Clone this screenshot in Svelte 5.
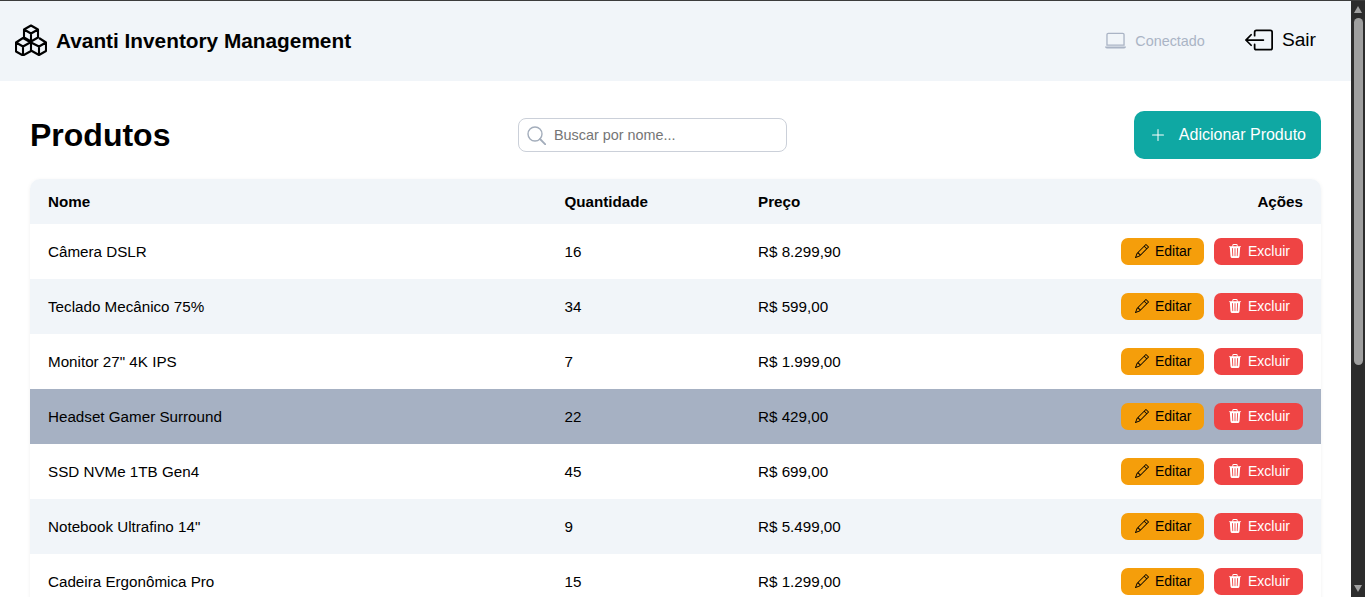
<script>
  const products = [
    { name: 'Câmera DSLR', qty: 16, price: 'R$ 8.299,90' },
    { name: 'Teclado Mecânico 75%', qty: 34, price: 'R$ 599,00' },
    { name: 'Monitor 27" 4K IPS', qty: 7, price: 'R$ 1.999,00' },
    { name: 'Headset Gamer Surround', qty: 22, price: 'R$ 429,00', selected: true },
    { name: 'SSD NVMe 1TB Gen4', qty: 45, price: 'R$ 699,00' },
    { name: 'Notebook Ultrafino 14"', qty: 9, price: 'R$ 5.499,00' },
    { name: 'Cadeira Ergonômica Pro', qty: 15, price: 'R$ 1.299,00' }
  ];

  let search = '';
</script>

<div class="window">
  <div class="page">
    <header class="topbar">
      <div class="brand">
        <svg class="logo" viewBox="0 0 32 32" fill="none" stroke="currentColor" stroke-width="2.100" stroke-linejoin="round">
          <path d="M16 1.500l7 4v8l-7 4-7-4v-8zM9 5.500l7 4 7-4M16 9.500v8" />
          <path d="M8 14l8 4.500v8.500l-8 4.500-7-4v-9zM1 18.500l7 4 8-4.500M8 22.500v8.500" />
          <path d="M24 14l7 4.500v8.500l-7 4-8-4.500M16 18.500l8 4 7-4M24 22.500v8.500" />
        </svg>
        <span>Avanti Inventory Management</span>
      </div>
      <div class="top-actions">
        <div class="status">
          <svg viewBox="0 0 16 16" fill="currentColor">
            <path d="M13.500 3a.5.5 0 0 1 .5.5V11H2V3.500a.5.5 0 0 1 .5-.5zm-11-1A1.500 1.500 0 0 0 1 3.500V12h14V3.500A1.500 1.500 0 0 0 13.500 2zM0 12.500h16a1.500 1.500 0 0 1-1.500 1.500h-13A1.500 1.500 0 0 1 0 12.500" />
          </svg>
          <span>Conectado</span>
        </div>
        <button class="logout" type="button">
          <svg viewBox="0 0 16 16" fill="currentColor">
            <path d="M6 12.500a.5.5 0 0 0 .5.5h8a.5.5 0 0 0 .5-.5v-9a.5.5 0 0 0-.5-.5h-8a.5.5 0 0 0-.5.5v2a.5.5 0 0 1-1 0v-2A1.500 1.500 0 0 1 6.500 2h8A1.500 1.500 0 0 1 16 3.500v9a1.500 1.500 0 0 1-1.500 1.500h-8A1.500 1.500 0 0 1 5 12.500v-2a.5.5 0 0 1 1 0z" />
            <path d="M.146 8.354a.5.5 0 0 1 0-.708l3-3a.5.5 0 1 1 .708.708L1.707 7.500H10.500a.5.5 0 0 1 0 1H1.707l2.147 2.146a.5.5 0 0 1-.708.708z" />
          </svg>
          Sair
        </button>
      </div>
    </header>

    <main class="content">
      <div class="toolbar">
        <h1>Produtos</h1>
        <label class="search">
          <svg viewBox="0 0 19 19" fill="none" stroke="currentColor" stroke-width="1.400">
            <circle cx="8" cy="8" r="7" />
            <path d="M13 13l5.300 5.300" stroke-width="1.800" stroke-linecap="round" />
          </svg>
          <input type="text" placeholder="Buscar por nome..." bind:value={search} />
        </label>
        <button class="add" type="button">
          <svg viewBox="0 0 16 16" fill="currentColor">
            <path fill-rule="evenodd" d="M8 2a.5.5 0 0 1 .5.5v5h5a.5.5 0 0 1 0 1h-5v5a.5.5 0 0 1-1 0v-5h-5a.5.5 0 0 1 0-1h5v-5A.5.5 0 0 1 8 2" />
          </svg>
          Adicionar Produto
        </button>
      </div>

      <div class="table-card">
        <table>
          <thead>
            <tr>
              <th class="col-name">Nome</th>
              <th class="col-qty">Quantidade</th>
              <th>Preço</th>
              <th class="col-actions">Ações</th>
            </tr>
          </thead>
          <tbody>
            {#each products as product}
              <tr class:selected={product.selected}>
                <td>{product.name}</td>
                <td>{product.qty}</td>
                <td>{product.price}</td>
                <td class="col-actions">
                  <div class="actions">
                    <button class="edit" type="button">
                      <svg viewBox="0 0 16 16" fill="currentColor">
                        <path d="M12.146.146a.5.5 0 0 1 .708 0l3 3a.5.5 0 0 1 0 .708l-10 10a.5.5 0 0 1-.168.11l-5 2a.5.5 0 0 1-.65-.65l2-5a.5.5 0 0 1 .11-.168zM11.207 2.500 13.500 4.793 14.793 3.500 12.500 1.207zm1.586 3L10.500 3.207 4 9.707V10h.5a.5.5 0 0 1 .5.5v.5h.5a.5.5 0 0 1 .5.5v.5h.293zm-9.761 5.175-.106.106-1.528 3.821 3.821-1.528.106-.106A.5.5 0 0 1 5 12.500V12h-.5a.5.5 0 0 1-.5-.5V11h-.5a.5.5 0 0 1-.468-.325" />
                      </svg>
                      Editar
                    </button>
                    <button class="delete" type="button">
                      <svg viewBox="0 0 16 16" fill="currentColor">
                        <path d="M11 1.500v1h3.500a.5.5 0 0 1 0 1h-.538l-.853 10.660A2 2 0 0 1 11.115 16h-6.230a2 2 0 0 1-1.994-1.840L2.038 3.500H1.500a.5.5 0 0 1 0-1H5v-1A1.500 1.500 0 0 1 6.500 0h3A1.500 1.500 0 0 1 11 1.500m-5 0v1h4v-1a.5.5 0 0 0-.5-.5h-3a.5.5 0 0 0-.5.5M4.500 5.029l.5 8.500a.5.5 0 1 0 .998-.06l-.5-8.500a.5.5 0 1 0-.998.06m6.530-.528a.5.5 0 0 0-.528.47l-.5 8.500a.5.5 0 0 0 .998.058l.5-8.500a.5.5 0 0 0-.47-.528M8 4.500a.5.5 0 0 0-.5.5v8.500a.5.5 0 0 0 1 0V5a.5.5 0 0 0-.5-.5" />
                      </svg>
                      Excluir
                    </button>
                  </div>
                </td>
              </tr>
            {/each}
          </tbody>
        </table>
      </div>
    </main>
  </div>

  <div class="scrollbar" aria-hidden="true">
    <span class="arrow up"></span>
    <span class="thumb"></span>
    <span class="arrow down"></span>
  </div>
</div>

<style>
  :global(body) {
    margin: 0;
    background: #fff;
  }

  .window {
    display: flex;
    height: 100vh;
    box-sizing: border-box;
    border-top: 1px solid #3c3c3c;
    overflow: hidden;
    font-family: "Liberation Sans", Arial, sans-serif;
    color: #000;
  }

  .page {
    flex: 1;
    min-width: 0;
    overflow: hidden;
  }

  /* header */
  .topbar {
    display: flex;
    align-items: center;
    justify-content: space-between;
    height: 80px;
    padding: 0 35px 0 15px;
    background: #f1f5f9;
  }

  .brand {
    display: flex;
    align-items: center;
    gap: 9px;
    font-size: 20.800px;
    font-weight: 700;
  }

  .logo {
    width: 32px;
    height: 32px;
    margin-top: -3px;
  }

  .top-actions {
    display: flex;
    align-items: center;
    gap: 40px;
  }

  .status {
    display: flex;
    align-items: center;
    gap: 9px;
    font-size: 14.400px;
    color: #aab4c5;
  }

  .status svg {
    width: 21px;
    height: 21px;
    margin-top: -2px;
  }

  .logout {
    display: flex;
    align-items: center;
    gap: 9px;
    padding: 0 0 2px;
    border: 0;
    background: none;
    font: inherit;
    font-size: 19.200px;
    color: #000;
    cursor: pointer;
  }

  .logout svg {
    width: 28px;
    height: 28px;
  }

  /* toolbar */
  .content {
    padding: 30px 30px 0;
  }

  .toolbar {
    display: grid;
    grid-template-columns: 488px 269px 1fr;
    align-items: center;
    height: 48px;
    margin-bottom: 20px;
  }

  h1 {
    margin: 0;
    font-size: 32px;
    font-weight: 700;
  }

  .search {
    display: flex;
    align-items: center;
    gap: 8px;
    height: 34px;
    box-sizing: border-box;
    padding: 0 8px;
    border: 1px solid #cbd0d9;
    border-radius: 8px;
    background: #fff;
    color: #a3adbb;
  }

  .search svg {
    flex: none;
    width: 19px;
    height: 19px;
  }

  .search input {
    flex: 1;
    min-width: 0;
    padding: 0;
    border: 0;
    outline: 0;
    background: none;
    font: inherit;
    font-size: 14.400px;
    color: #000;
  }

  .search input::placeholder {
    color: #757575;
    opacity: 1;
  }

  .add {
    justify-self: end;
    display: flex;
    align-items: center;
    gap: 13px;
    height: 48px;
    padding: 0 15px 0 16px;
    border: 0;
    border-radius: 10px;
    background: #0fa8a3;
    font: inherit;
    font-size: 16px;
    color: #fff;
    cursor: pointer;
  }

  .add svg {
    width: 16px;
    height: 16px;
  }

  /* table */
  .table-card {
    border-radius: 10px;
    overflow: hidden;
    box-shadow: 0 1px 4px rgba(0, 0, 0, 0.06);
  }

  table {
    width: 100%;
    border-collapse: collapse;
    table-layout: fixed;
    font-size: 15.200px;
  }

  thead tr {
    height: 45px;
    background: #f1f5f9;
  }

  tbody tr {
    height: 55px;
    background: #fff;
  }

  tbody tr:nth-child(even) {
    background: #f1f5f9;
  }

  tbody tr.selected {
    background: #a6b1c3;
  }

  th,
  td {
    padding: 0 18px;
    text-align: left;
  }

  th {
    font-weight: 700;
  }

  .col-name {
    width: 480.500px;
  }

  .col-qty {
    width: 157.500px;
  }

  th.col-actions {
    width: 360px;
    text-align: right;
  }

  .actions {
    display: flex;
    justify-content: flex-end;
    gap: 10px;
  }

  .actions button {
    display: flex;
    align-items: center;
    gap: 6px;
    height: 27px;
    padding: 0 13px 2px 14px;
    border: 0;
    border-radius: 7px;
    font: inherit;
    font-size: 14px;
    cursor: pointer;
  }

  .actions svg {
    width: 14px;
    height: 14px;
  }

  .actions .edit {
    padding-right: 12.500px;
    background: #f59e0b;
    color: #000;
  }

  .delete {
    background: #ef4444;
    color: #fff;
  }

  /* browser scrollbar */
  .scrollbar {
    flex: none;
    display: flex;
    flex-direction: column;
    align-items: center;
    width: 14px;
    background: #2c2c2c;
  }

  .arrow {
    flex: none;
    width: 0;
    height: 0;
    border-left: 4.500px solid transparent;
    border-right: 4.500px solid transparent;
  }

  .arrow.up {
    margin-top: 5px;
    border-bottom: 7px solid #a0a0a0;
  }

  .arrow.down {
    margin-top: auto;
    margin-bottom: 5px;
    border-top: 7px solid #a0a0a0;
  }

  .thumb {
    flex: none;
    width: 9px;
    height: 347px;
    margin-top: 5px;
    border-radius: 5px;
    background: #9f9f9f;
  }
</style>
